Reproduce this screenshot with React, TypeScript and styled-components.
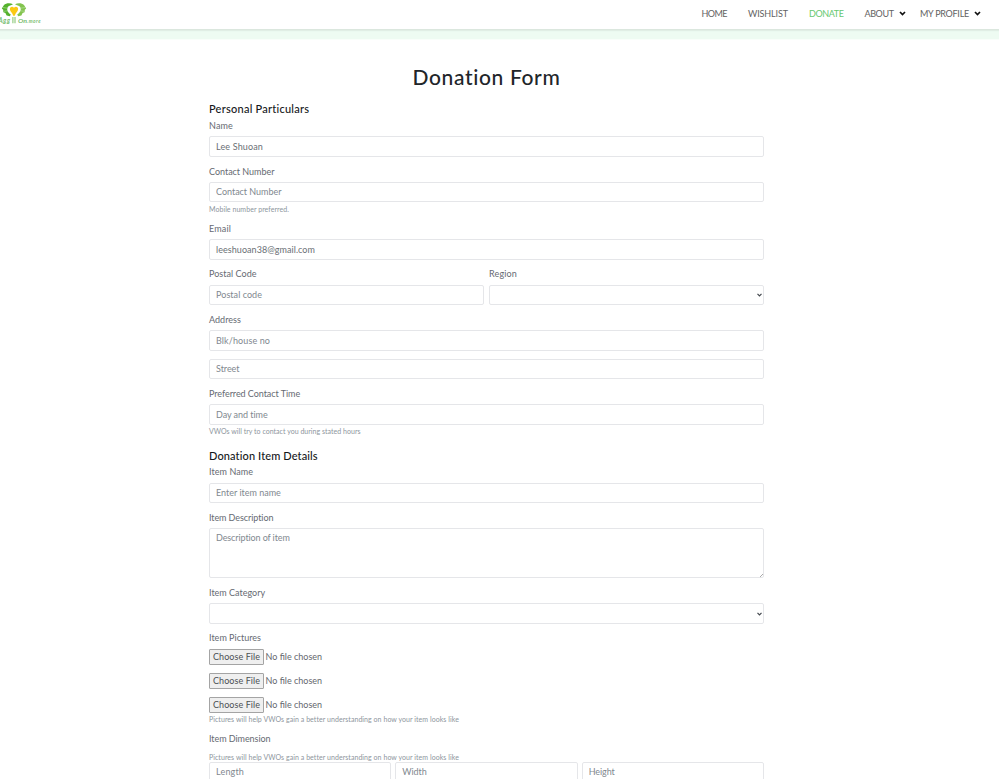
import React from "react";
import styled, { createGlobalStyle } from "styled-components";

const Global = createGlobalStyle`
  * { box-sizing: border-box; }
  html, body { margin: 0; height: 100%; overflow: hidden; background: #fff; }
  body { font-family: Lato, "Open Sans", sans-serif; font-size: 9px; color: #666a72; }
  input, select, textarea, button { font: inherit; }
`;

interface Spaced { $ls?: number }
interface Gapped { $gap: number }

const Page = styled.div`
  height: 779px;
  overflow: hidden;
`;
const Header = styled.header`
  display: flex;
  justify-content: space-between;
  height: 40px;
  background: linear-gradient(#fff 0 29px, #dbe7de 29px 30px, #e1eee5 30px 31px, #ebf9f0 31px 32px, #eefbf2 32px 39px, #f9fefa 39px);
`;
const Logo = styled.svg`
  display: block;
  width: 42px;
  height: 27px;
`;
const Nav = styled.nav`
  display: flex;
  height: 26px;
  align-items: center;
`;
const NavLink = styled.a<Spaced & { $w: number; $active?: boolean }>`
  width: ${p => p.$w}px;
  display: flex;
  align-items: center;
  white-space: nowrap;
  letter-spacing: ${p => p.$ls ?? 0}px;
  color: ${p => (p.$active ? "#67c870" : "#626262")};
`;
const Caret = styled.svg`
  width: 7px;
  height: 5px;
  margin-left: 5.5px;
  flex: none;
  fill: none;
  stroke: #111;
  stroke-width: 1.7;
`;
const Form = styled.form`
  display: flex;
  flex-direction: column;
  width: 555px;
  margin-left: 209px;
`;
const Title = styled.h1`
  margin: 24px 0 0;
  height: 28px;
  line-height: 26px;
  font-size: 21px;
  font-weight: 500;
  letter-spacing: 0.64px;
  text-align: center;
  color: #212529;
`;
const Heading = styled.h2<Gapped & Spaced>`
  margin: ${p => p.$gap}px 0 0;
  height: 14px;
  line-height: 14px;
  font-size: 11px;
  font-weight: 500;
  letter-spacing: ${p => p.$ls ?? 0}px;
  color: #15181b;
`;
const Label = styled.label<Gapped & Spaced>`
  display: block;
  margin-top: ${p => p.$gap}px;
  height: 12px;
  line-height: 12px;
  letter-spacing: ${p => p.$ls ?? 0}px;
`;
const Hint = styled.small<Gapped & Spaced>`
  display: block;
  margin-top: ${p => p.$gap}px;
  height: 9px;
  line-height: 9px;
  font-size: 7px;
  white-space: nowrap;
  letter-spacing: ${p => p.$ls ?? 0}px;
  color: #8d959d;
`;
const Input = styled.input<Gapped & Spaced & { $h: number; $lift?: number }>`
  display: block;
  width: 100%;
  min-width: 0;
  height: ${p => p.$h}px;
  margin: ${p => p.$gap}px 0 0;
  padding: 0 6px ${p => p.$lift ?? (p.$h === 20 ? 1 : 0)}px;
  border: 1px solid #e5e6e9;
  border-radius: 2px;
  outline: none;
  background: #fff;
  color: #6a6f75;
  letter-spacing: ${p => p.$ls ?? 0}px;
  &::placeholder { color: #81888f; opacity: 1; }
`;
const Area = styled(Input).attrs({ as: "textarea" })`
  padding: 3px 6px;
  line-height: 12px;
  resize: none;
`;
const AreaWrap = styled.div`
  position: relative;
`;
const Grip = styled.svg`
  position: absolute;
  right: 1px;
  bottom: 1px;
  width: 3px;
  height: 3px;
  stroke: #aaa;
`;
const SelectBox = styled.button<Gapped & { $h: number }>`
  display: flex;
  justify-content: flex-end;
  align-items: center;
  width: 100%;
  height: ${p => p.$h}px;
  margin: ${p => p.$gap}px 0 0;
  padding: 0 1px 0 0;
  border: 1px solid #e5e6e9;
  border-radius: 2px;
  background: #fff;
`;
const SelectCaret = styled.svg`
  width: 5px;
  height: 4px;
  fill: none;
  stroke: #42474d;
  stroke-width: 1.2;
`;
const Columns = styled.div<{ $n: number; $space: number }>`
  display: grid;
  grid-template-columns: repeat(${p => p.$n}, 1fr);
  column-gap: ${p => p.$space}px;
`;
const FileRow = styled.div<Gapped>`
  display: flex;
  height: 16px;
  line-height: 15px;
  margin-top: ${p => p.$gap}px;
  color: #64676e;
`;
const FileButton = styled.button`
  width: 55px;
  height: 16px;
  margin-right: 1.5px;
  padding: 0 0 1px;
  border: 1px solid #a4a4a4;
  border-radius: 1px;
  background: #efefef;
  color: #4c4f53;
  line-height: 13px;
  letter-spacing: 0.06px;
`;

const pictureHint = "Pictures will help VWOs gain a better understanding on how your item looks like";

function Brand() {
  return (
    <Logo viewBox="0 0 42 27">
      <path d="M13 4.200C10.500 2.800 6 2.800 4 5L1.800 8.500l1.400 1.300.2 2.400 2 .8 1.200 2.400 3.200.8 1-1.600C7.500 12.500 6.300 9.500 8 6.800c1.200-1.400 3-1.600 5-2.600z" fill="#55b22c" />
      <path d="M15 4.200c2.500-1.400 7-1.400 9 .8l2.200 3.500-1.400 1.300-.2 2.400-2 .8-1.200 2.400-3.200.8-1-1.600c3.300-2.100 4.500-5.100 2.800-7.800-1.200-1.400-3-1.600-5-2.600z" fill="#83c44f" />
      <path d="M3 7.500l5 .8M4 11.300l4-.6M25 7.500l-5 .8M24 11.300l-4-.6" stroke="#c5e6b4" strokeWidth=".5" />
      <path d="M14 7.800c-1.500-1.800-4.400-.9-4.100 1.400.2 2.500 2.600 3.600 3.300 6.500h1.600c.7-2.900 3.100-4 3.300-6.500.3-2.300-2.600-3.200-4.100-1.400z" fill="#fbc914" />
      <path d="M12.900 17v6.300M15 17v6.300" stroke="#94cc83" strokeWidth="1.200" />
      <text x="-1.500" y="23.300" fontFamily="Lato" fontSize="6.500" fontStyle="italic" fontWeight="700" fill="#77bd70" textLength="11.500">Agg</text>
      <text x="18" y="23" fontFamily="Lato" fontSize="6" fontStyle="italic" fontWeight="700" fill="#77bd70" textLength="9" lengthAdjust="spacingAndGlyphs">On</text>
      <text x="27" y="23" fontFamily="Lato" fontSize="4.800" fontStyle="italic" fontWeight="700" fill="#77bd70" textLength="13.500">.more</text>
    </Logo>
  );
}
const NavCaret = () => <Caret viewBox="0 0 7 5"><path d="M1 1l2.500 2.500L6 1" /></Caret>;
const Select = (p: { gap: number; h: number }) => (
  <SelectBox type="button" $gap={p.gap} $h={p.h}>
    <SelectCaret viewBox="0 0 5 4"><path d="M.5 .8l2 2 2-2" /></SelectCaret>
  </SelectBox>
);
const FilePicker = (p: { gap: number }) => (
  <FileRow $gap={p.gap}><FileButton type="button">Choose File</FileButton>No file chosen</FileRow>
);

export default function App() {
  return (
    <Page>
      <Global />
      <Header>
        <Brand />
        <Nav>
          <NavLink $w={46.5} $ls={-0.53}>HOME</NavLink>
          <NavLink $w={61} $ls={-0.12}>WISHLIST</NavLink>
          <NavLink $w={55.5} $ls={-0.4} $active>DONATE</NavLink>
          <NavLink $w={55.5} $ls={-0.4}>ABOUT<NavCaret /></NavLink>
          <NavLink $w={79} $ls={-0.26}>MY PROFILE<NavCaret /></NavLink>
        </Nav>
      </Header>
      <Form>
        <Title>Donation Form</Title>
        <Heading $gap={10} $ls={0.25}>Personal Particulars</Heading>
        <Label $gap={4} $ls={0.16}>Name</Label>
        <Input $gap={4} $h={21} $ls={0.15} defaultValue="Lee Shuoan" />
        <Label $gap={9} $ls={-0.02}>Contact Number</Label>
        <Input $gap={4} $h={20} $ls={-0.02} placeholder="Contact Number" />
        <Hint $gap={3} $ls={0.05}>Mobile number preferred.</Hint>
        <Label $gap={9} $ls={0.15}>Email</Label>
        <Input $gap={4} $h={21} $ls={0.056} defaultValue="leeshuoan38@gmail.com" />
        <Columns $n={2} $space={5}>
          <div>
            <Label $gap={8} $ls={0.035}>Postal Code</Label>
            <Input $gap={5} $h={20} $ls={0.054} placeholder="Postal code" />
          </div>
          <div>
            <Label $gap={8} $ls={0.156}>Region</Label>
            <Select gap={5} h={20} />
          </div>
        </Columns>
        <Label $gap={9} $ls={0.04}>Address</Label>
        <Input $gap={4} $h={21} $ls={0.107} placeholder="Blk/house no" />
        <Input $gap={8} $h={20} $ls={-0.033} placeholder="Street" />
        <Label $gap={9} $ls={-0.05}>Preferred Contact Time</Label>
        <Input $gap={4} $h={21} $ls={-0.048} placeholder="Day and time" />
        <Hint $gap={2} $ls={0.025}>VWOs will try to contact you during stated hours</Hint>
        <Heading $gap={13} $ls={0.12}>Donation Item Details</Heading>
        <Label $gap={3} $ls={0.065}>Item Name</Label>
        <Input $gap={5} $h={20} placeholder="Enter item name" />
        <Label $gap={9} $ls={-0.086}>Item Description</Label>
        <AreaWrap>
          <Area $gap={4} $h={50} $ls={-0.11} placeholder="Description of item" />
          <Grip viewBox="0 0 3 3"><path d="M0 3L3 0" /></Grip>
        </AreaWrap>
        <Label $gap={9}>Item Category</Label>
        <Select gap={4} h={21} />
        <Label $gap={8} $ls={0.01}>Item Pictures</Label>
        <FilePicker gap={5} />
        <FilePicker gap={8} />
        <FilePicker gap={8} />
        <Hint $gap={2} $ls={0.055}>{pictureHint}</Hint>
        <Label $gap={9} $ls={-0.059}>Item Dimension</Label>
        <Hint $gap={8} $ls={0.055}>{pictureHint}</Hint>
        <Columns $n={3} $space={4}>
          <Input $gap={0} $h={21} $lift={2} $ls={0.168} placeholder="Length" />
          <Input $gap={0} $h={21} $lift={2} $ls={-0.1} placeholder="Width" />
          <Input $gap={0} $h={21} $lift={2} $ls={-0.085} placeholder="Height" />
        </Columns>
      </Form>
    </Page>
  );
}
